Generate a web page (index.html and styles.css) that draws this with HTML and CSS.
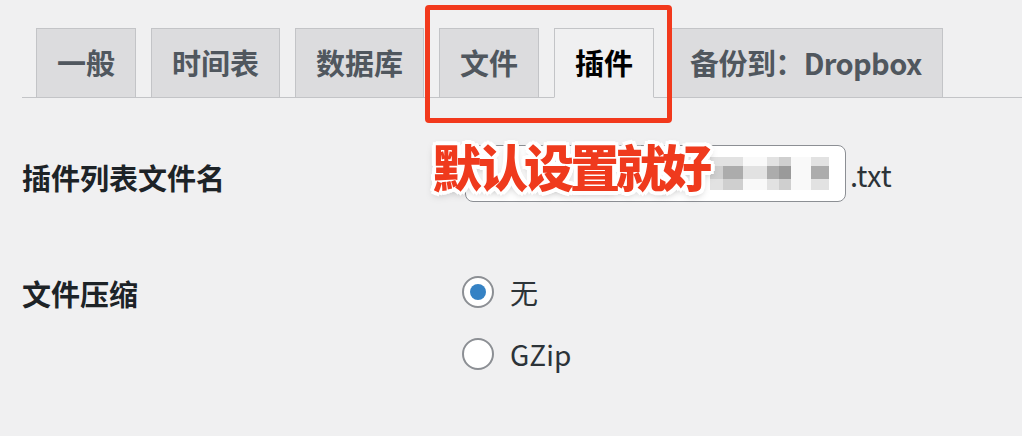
FILE: index.html
```html
<!DOCTYPE html>
<html lang="zh-CN">
<head>
    <meta charset="UTF-8">
    <meta name="viewport" content="width=device-width, initial-scale=1.0">
    <title>插件 设置</title>
    <link rel="stylesheet" href="styles.css">
</head>
<body>
    <div class="page">
        <!-- 标签页 -->
        <nav class="tab-bar">
            <a class="tab">一般</a>
            <a class="tab">时间表</a>
            <a class="tab">数据库</a>
            <a class="tab">文件</a>
            <a class="tab active">插件</a>
            <a class="tab tab-dropbox">备份到：Dropbox</a>
        </nav>

        <!-- 设置表单 -->
        <div class="form">
            <div class="row row-file">
                <div class="row-label">插件列表文件名</div>
                <div class="row-field">
                    <div class="text-input">
                        <div class="mosaic">
                            <div class="mosaic-col w13"><i class="px-a"></i><i class="px-b"></i><i class="px-a"></i></div>
                            <div class="mosaic-col w20"><i class="px-a"></i><i class="px-c"></i><i class="px-b"></i></div>
                            <div class="mosaic-col w24"><i class="px-w"></i><i class="px-a"></i><i class="px-w"></i></div>
                            <div class="mosaic-col w12"><i class="px-a"></i><i class="px-c"></i><i class="px-a"></i></div>
                            <div class="mosaic-col w12"><i class="px-b"></i><i class="px-d"></i><i class="px-b"></i></div>
                            <div class="mosaic-col w20"><i class="px-w"></i><i class="px-w"></i><i class="px-w"></i></div>
                            <div class="mosaic-col w18"><i class="px-a"></i><i class="px-c"></i><i class="px-a"></i></div>
                        </div>
                    </div>
                    <span class="suffix">.txt</span>
                </div>
            </div>

            <div class="row row-compress">
                <div class="row-label">文件压缩</div>
                <div class="row-field">
                    <div class="radio-list">
                        <label class="radio-item">
                            <span class="radio checked"></span>
                            <span class="radio-text">无</span>
                        </label>
                        <label class="radio-item">
                            <span class="radio"></span>
                            <span class="radio-text">GZip</span>
                        </label>
                    </div>
                </div>
            </div>
        </div>

        <!-- 标注 -->
        <div class="mark-box"></div>
        <div class="mark-text">默认设置就好</div>
    </div>
</body>
</html>
```

FILE: styles.css
```css
* {
    margin: 0;
    padding: 0;
    box-sizing: border-box;
}

body {
    width: 1022px;
    height: 436px;
    font-family: "Noto Sans CJK SC", "Noto Sans", sans-serif;
    background: #f0f0f1;
    color: #1d2327;
    overflow: hidden;
}

.page {
    position: relative;
    height: 100%;
    padding: 28px 0 0 22px;
}

/* 标签页 */
.tab-bar {
    display: flex;
    gap: 15px;
    padding-left: 14px;
    border-bottom: 1px solid #c3c4c7;
}

.tab {
    display: block;
    height: 70px;
    margin-bottom: -1px;
    padding: 0 20px;
    border: 1px solid #c3c4c7;
    background: #dcdcde;
    color: #50575e;
    font-size: 29px;
    font-weight: 700;
    line-height: 66px;
    white-space: nowrap;
}

.tab.active {
    background: #f0f0f1;
    border-bottom-color: #f0f0f1;
    color: #000;
}

.tab-dropbox {
    letter-spacing: -0.6px;
}

/* 设置表单 */
.row {
    display: grid;
    grid-template-columns: 440px 1fr;
}

.row-label {
    font-size: 29px;
    font-weight: 700;
    line-height: 40px;
    color: #1d2327;
}

.row-file {
    padding-top: 47px;
}

.row-file .row-label {
    margin-top: 12px;
}

.row-field {
    display: flex;
    align-items: center;
}

.text-input {
    width: 381px;
    height: 57px;
    margin-left: 3px;
    background: #fff;
    border: 1px solid #8c8f94;
    border-radius: 8px;
    padding: 11px 0 0 244px;
}

.mosaic {
    display: flex;
}

.mosaic-col {
    display: flex;
    flex-direction: column;
}

.mosaic-col i {
    display: block;
}

.mosaic-col i:nth-child(1) { height: 9px; }
.mosaic-col i:nth-child(2) { height: 13px; }
.mosaic-col i:nth-child(3) { height: 11px; }

.w12 { width: 12px; }
.w13 { width: 13px; }
.w18 { width: 18px; }
.w20 { width: 20px; }
.w24 { width: 24px; }

.px-w { background: #f9f9f9; }
.px-a { background: #e2e2e2; }
.px-b { background: #cfcfcf; }
.px-c { background: #acacac; }
.px-d { background: #9a9a9a; }

.suffix {
    margin-left: 4px;
    font-size: 29px;
    color: #2c3338;
}

.row-compress {
    padding-top: 70px;
}

.row-compress .row-label {
    margin-top: 1px;
}

.radio-list {
    display: flex;
    flex-direction: column;
    gap: 22px;
}

.radio-item {
    display: flex;
    align-items: center;
    gap: 16px;
    height: 40px;
}

.radio {
    width: 32px;
    height: 32px;
    border: 2px solid #8c8f94;
    border-radius: 50%;
    background: #fff;
    display: flex;
    align-items: center;
    justify-content: center;
}

.radio.checked::after {
    content: "";
    width: 16px;
    height: 16px;
    border-radius: 50%;
    background: #3582c4;
}

.radio-text {
    font-size: 28px;
    color: #2c3338;
}

/* 标注 */
.mark-box {
    position: absolute;
    left: 425px;
    top: 5px;
    width: 247px;
    height: 118px;
    border: 5px solid #f2391c;
    border-radius: 4px;
}

.mark-text {
    position: absolute;
    left: 432px;
    top: 140px;
    font-size: 50px;
    font-weight: 900;
    line-height: 50px;
    letter-spacing: -4px;
    color: #ef3a1d;
    white-space: nowrap;
    text-shadow:
        -3px -3px 0 #fff, 3px -3px 0 #fff, -3px 3px 0 #fff, 3px 3px 0 #fff,
        0 -4px 0 #fff, 0 4px 0 #fff, -4px 0 0 #fff, 4px 0 0 #fff,
        0 3px 8px rgba(0, 0, 0, 0.35);
}
```
